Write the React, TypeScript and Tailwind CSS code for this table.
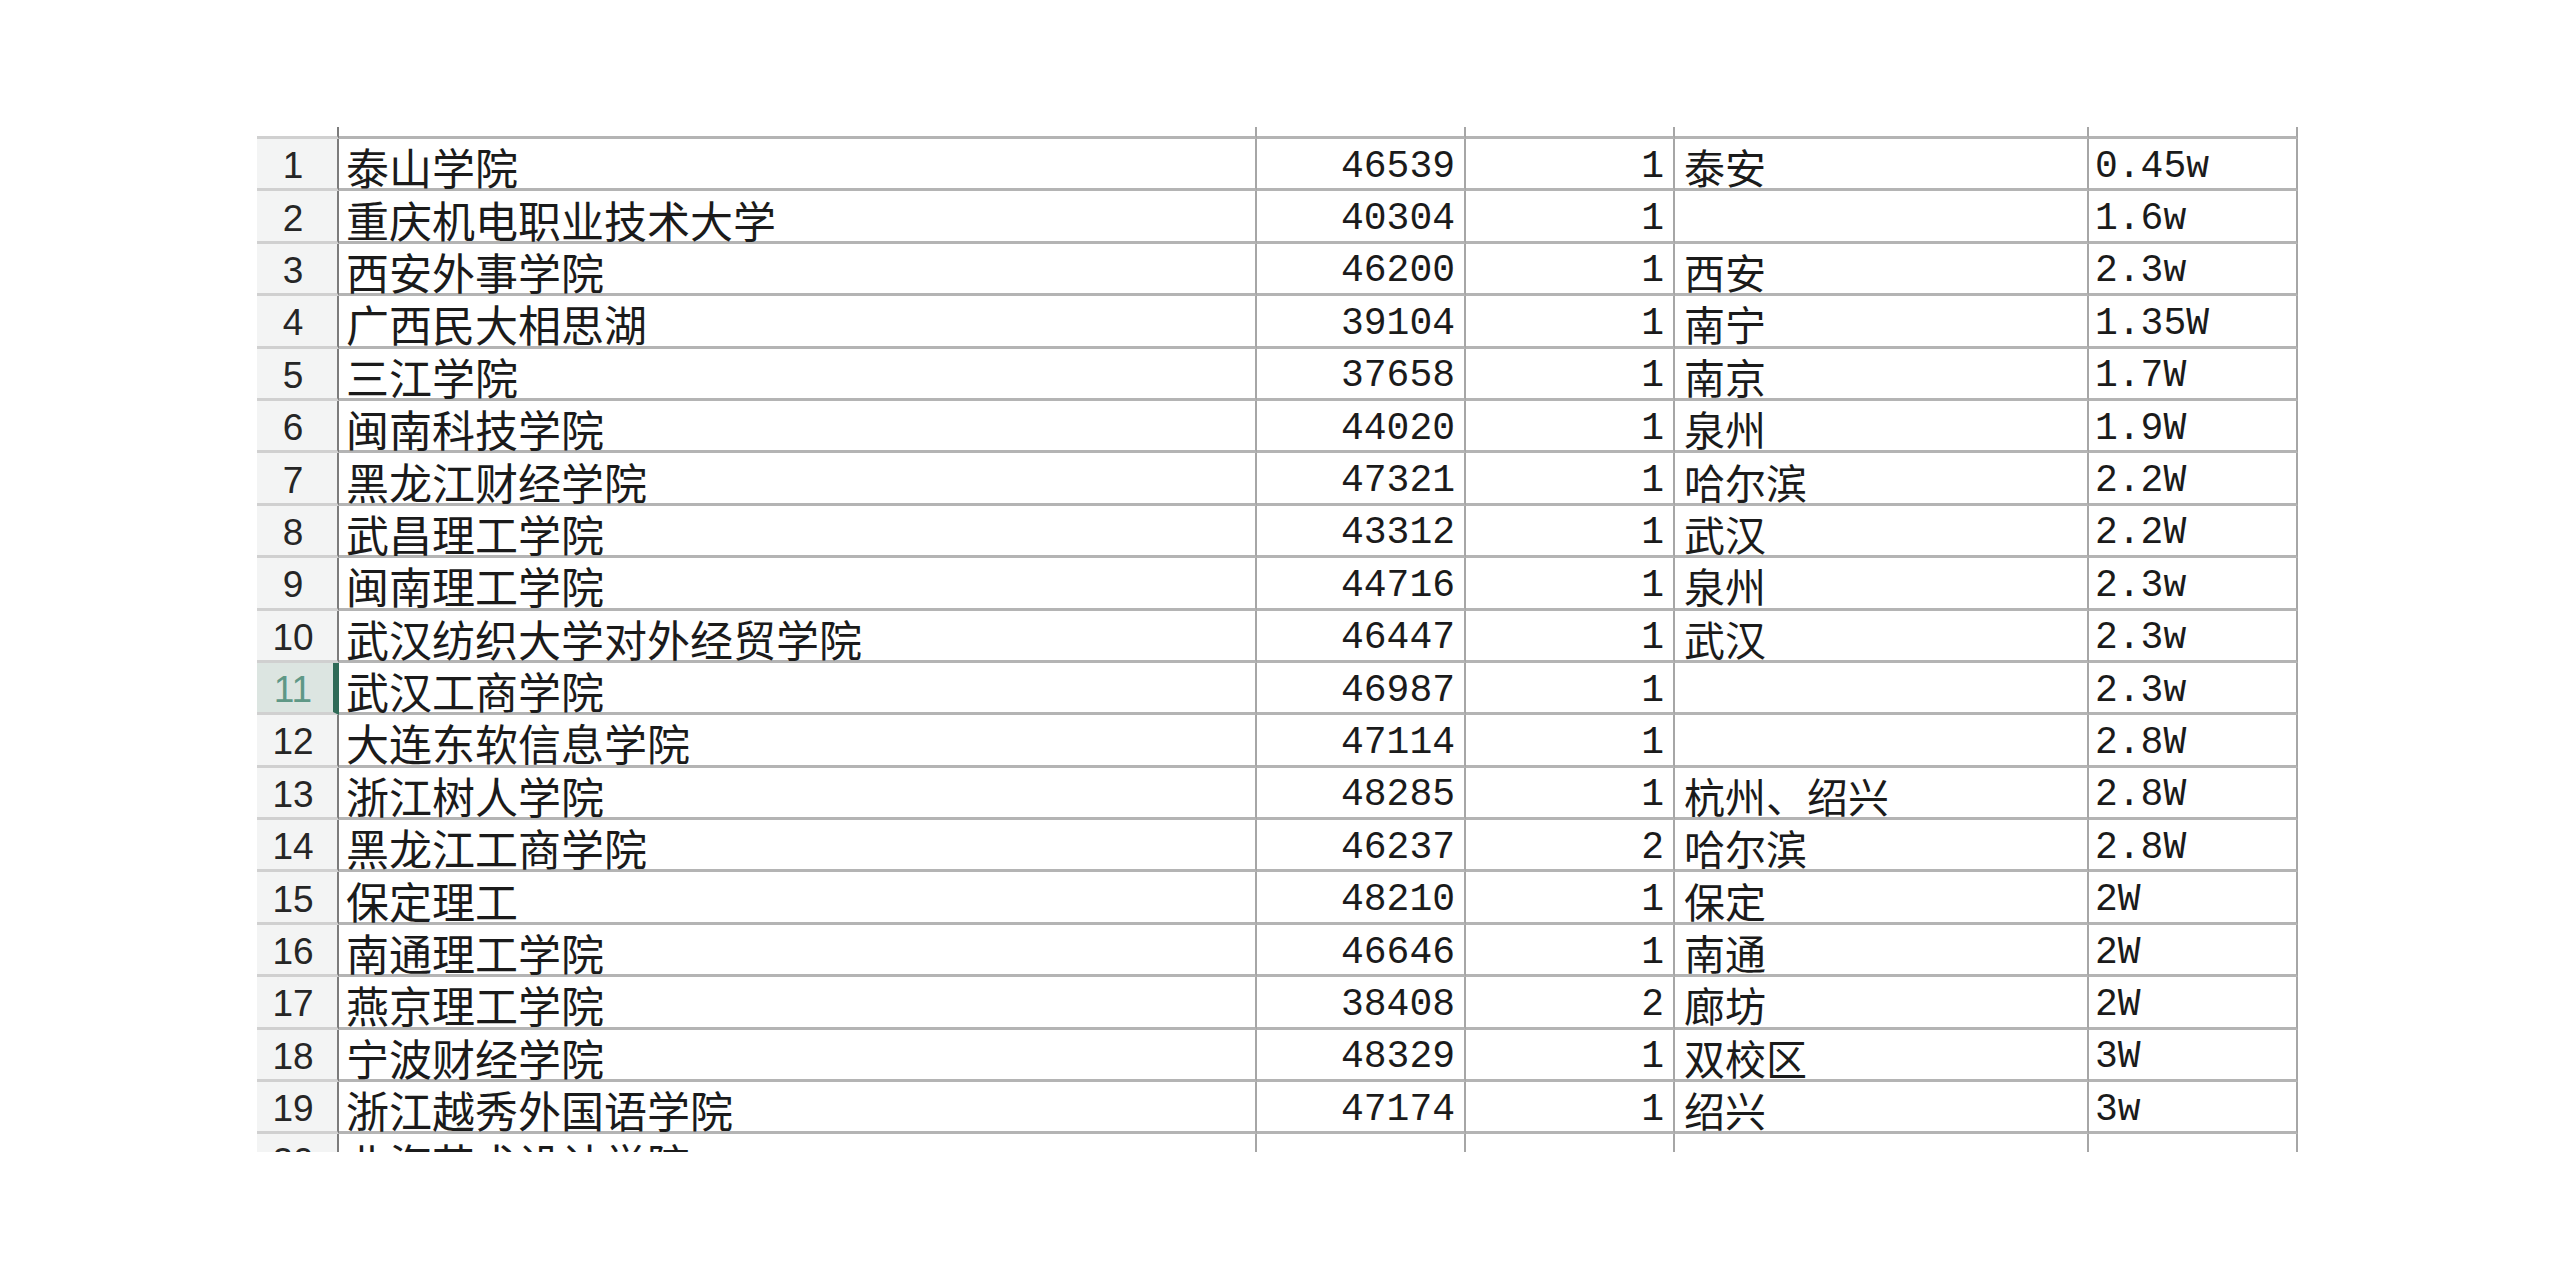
const rows: [string, string, string, string, string, string][] = [
  ['1', '泰山学院', '46539', '1', '泰安', '0.45w'],
  ['2', '重庆机电职业技术大学', '40304', '1', '', '1.6w'],
  ['3', '西安外事学院', '46200', '1', '西安', '2.3w'],
  ['4', '广西民大相思湖', '39104', '1', '南宁', '1.35W'],
  ['5', '三江学院', '37658', '1', '南京', '1.7W'],
  ['6', '闽南科技学院', '44020', '1', '泉州', '1.9W'],
  ['7', '黑龙江财经学院', '47321', '1', '哈尔滨', '2.2W'],
  ['8', '武昌理工学院', '43312', '1', '武汉', '2.2W'],
  ['9', '闽南理工学院', '44716', '1', '泉州', '2.3w'],
  ['10', '武汉纺织大学对外经贸学院', '46447', '1', '武汉', '2.3w'],
  ['11', '武汉工商学院', '46987', '1', '', '2.3w'],
  ['12', '大连东软信息学院', '47114', '1', '', '2.8W'],
  ['13', '浙江树人学院', '48285', '1', '杭州、绍兴', '2.8W'],
  ['14', '黑龙江工商学院', '46237', '2', '哈尔滨', '2.8W'],
  ['15', '保定理工', '48210', '1', '保定', '2W'],
  ['16', '南通理工学院', '46646', '1', '南通', '2W'],
  ['17', '燕京理工学院', '38408', '2', '廊坊', '2W'],
  ['18', '宁波财经学院', '48329', '1', '双校区', '3W'],
  ['19', '浙江越秀外国语学院', '47174', '1', '绍兴', '3w'],
];

const cjk = "font-['Noto_Sans_CJK_SC',sans-serif]";
const mono = "font-['Liberation_Mono',monospace]";
const line = 'border-b-[3px] border-b-[#b4b4b4]';
const vline = 'border-r-2 border-r-[#a6a6a6]';

type RowProps = { cells: [string, string, string, string, string, string]; selected?: boolean };

const Row = ({ cells, selected }: RowProps) => {
  const [n, name, score, count, city, cost] = cells;
  return (
    <div className="flex h-[52.4px] text-[#1b1b1b]">
      <div
        className={
          selected
            ? "flex w-[82px] shrink-0 items-center justify-center border-r-[6px] border-b-[3px] border-r-[#2f6b58] border-b-[#d0d0d0] bg-[#dce5e1] pr-1 pt-1 font-['Liberation_Sans',sans-serif] text-[37px] leading-none text-[#5f9886]"
            : "flex w-[82px] shrink-0 items-center justify-center border-r-2 border-b-[3px] border-r-[#7c7c7c] border-b-[#d0d0d0] bg-[#f3f4f4] pr-2 pt-1 font-['Liberation_Sans',sans-serif] text-[37px] leading-none text-[#262626]"
        }
      >
        {n}
      </div>
      <div className={`flex w-[918px] shrink-0 items-center pl-[7px] pt-[6px] text-[43px] leading-none ${cjk} ${vline} ${line}`}>{name}</div>
      <div className={`flex w-[209px] shrink-0 items-center justify-end pr-[9px] pt-[6px] text-[38px] leading-none ${mono} ${vline} ${line}`}>{score}</div>
      <div className={`flex w-[209px] shrink-0 items-center justify-end pr-[9px] pt-[6px] text-[38px] leading-none ${mono} ${vline} ${line}`}>{count}</div>
      <div className={`flex w-[414px] shrink-0 items-center pl-[9px] pt-[6px] text-[41px] leading-none ${cjk} ${vline} ${line}`}>{city}</div>
      <div className={`flex w-[209px] shrink-0 items-center pl-[6px] pt-[6px] text-[38px] leading-none ${mono} ${vline} ${line}`}>{cost}</div>
    </div>
  );
};

const Stub = () => (
  <div className="flex h-[12px]">
    <div className="w-[82px] shrink-0 border-r-2 border-b-[3px] border-r-[#7c7c7c] border-b-[#d0d0d0]" />
    <div className={`w-[918px] shrink-0 ${vline} ${line}`} />
    <div className={`w-[209px] shrink-0 ${vline} ${line}`} />
    <div className={`w-[209px] shrink-0 ${vline} ${line}`} />
    <div className={`w-[414px] shrink-0 ${vline} ${line}`} />
    <div className={`w-[209px] shrink-0 ${vline} ${line}`} />
  </div>
);

export default function App() {
  return (
    <div className="h-[1280px] w-[2560px] overflow-hidden bg-white">
      <div className="ml-[257px] w-[2041px] pt-[127px]">
        <Stub />
        {rows.map((r) => (
          <Row key={r[0]} cells={r} selected={r[0] === '11'} />
        ))}
        {/* row 20 is cut off by the screenshot */}
        <div className="h-[18px] overflow-hidden">
          <Row cells={['20', '北海艺术设计学院', '', '', '', '']} />
        </div>
      </div>
    </div>
  );
}
